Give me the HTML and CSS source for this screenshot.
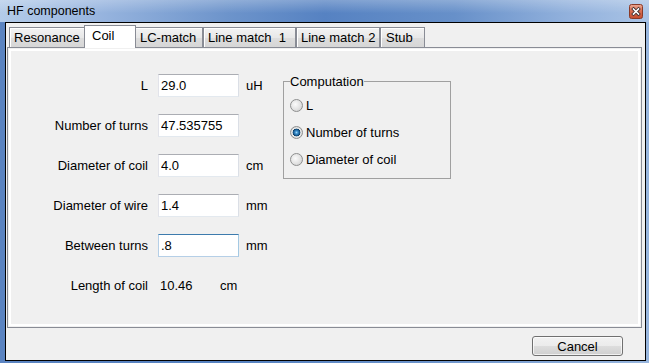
FILE: index.html
```html
<!DOCTYPE html>
<html>
<head>
<meta charset="utf-8">
<title>HF components</title>
<link rel="stylesheet" href="styles.css">
</head>
<body>
<div class="window">
  <div class="titlebar">
    <span class="title">HF components</span>
    <span class="close">
      <svg width="14" height="15" viewBox="0 0 14 15">
        <defs>
          <linearGradient id="cg" x1="0" y1="0" x2="0" y2="1">
            <stop offset="0" stop-color="#eba994"/>
            <stop offset="0.45" stop-color="#d86e52"/>
            <stop offset="1" stop-color="#c44b2d"/>
          </linearGradient>
        </defs>
        <rect x="0.5" y="0.5" width="13" height="14" rx="2" fill="url(#cg)" stroke="#8a3a28"/>
        <path d="M4.5 5 L9.5 10 M9.5 5 L4.5 10" stroke="#3b2b2b" stroke-width="3.2" stroke-linecap="square"/>
        <path d="M4.5 5 L9.5 10 M9.5 5 L4.5 10" stroke="#ffffff" stroke-width="1.6" stroke-linecap="square"/>
      </svg>
    </span>
  </div>
  <div class="frame">
    <div class="client">
      <div class="tabs">
        <div class="tab tab-res">Resonance</div>
        <div class="tab tab-coil tab-active">Coil</div>
        <div class="tab tab-lc">LC-match</div>
        <div class="tab tab-lm1">Line match  1</div>
        <div class="tab tab-lm2">Line match 2</div>
        <div class="tab tab-stub">Stub</div>
      </div>
      <div class="panel">
        <div class="form">
          <label class="lbl">L</label>
          <input class="field" type="text" value="29.0">
          <span class="unit">uH</span>

          <label class="lbl">Number of turns</label>
          <input class="field" type="text" value="47.535755">
          <span class="unit"></span>

          <label class="lbl">Diameter of coil</label>
          <input class="field" type="text" value="4.0">
          <span class="unit">cm</span>

          <label class="lbl">Diameter of wire</label>
          <input class="field" type="text" value="1.4">
          <span class="unit">mm</span>

          <label class="lbl">Between turns</label>
          <input class="field field-focus" type="text" value=".8">
          <span class="unit">mm</span>

          <span class="lbl">Length of coil</span>
          <span class="result"><span class="result-val">10.46</span><span>cm</span></span>
        </div>
        <fieldset class="group">
          <legend class="group-title">Computation</legend>
          <label class="opt"><input class="radio" type="radio" name="comp">L</label>
          <label class="opt"><input class="radio" type="radio" name="comp" checked>Number of turns</label>
          <label class="opt"><input class="radio" type="radio" name="comp">Diameter of coil</label>
        </fieldset>
      </div>
      <div class="footer">
        <button class="btn" type="button">Cancel</button>
      </div>
    </div>
  </div>
</div>
</body>
</html>
```
FILE: styles.css
```css
* { box-sizing: border-box; }

html, body {
  margin: 0;
  padding: 0;
  background: #ffffff;
}

body {
  font-family: "Liberation Sans", Arial, sans-serif;
  font-size: 13px;
  color: #000;
}

.window {
  width: 649px;
  height: 363px;
  display: flex;
  flex-direction: column;
  background: linear-gradient(to right, #5b84c1 0%, #5581c0 35%, #6a92ca 65%, #98b6de 100%);
}

.titlebar {
  flex: none;
  height: 22px;
  display: flex;
  align-items: center;
  justify-content: space-between;
  padding: 0 6px 0 7px;
  background:
    linear-gradient(to bottom, rgba(255,255,255,0.25), rgba(255,255,255,0) 60%),
    linear-gradient(to right, #b3cbe9 0%, #98b5df 15%, #6d94cb 35%, #5682c2 50%, #6790c9 70%, #93b2dd 88%, #a9c3e5 100%);
}

.title {
  font-size: 12.5px;
  color: #000;
  line-height: 22px;
}

.close {
  display: flex;
  width: 14px;
  height: 15px;
}

.frame {
  flex: 1;
  display: flex;
  padding: 0 3px 2px 5px;
}

.client {
  flex: 1;
  display: flex;
  flex-direction: column;
  border: 1px solid #000;
  background: #f0f0f0;
}

/* Tabs */
.tabs {
  flex: none;
  display: flex;
  align-items: flex-end;
  height: 22px;
  margin-top: 2px;
  padding-left: 3px;
}

.tab {
  height: 20px;
  line-height: 19px;
  padding-left: 4px;
  white-space: pre;
  border: 1px solid #898c95;
  border-bottom: none;
  background: linear-gradient(to bottom, #f3f3f3 0%, #e8e8e8 50%, #dddddd 51%, #d6d6d6 100%);
  box-shadow: inset 1px 1px 0 #ffffff;
}

.tab-res  { width: 77px; }
.tab-coil { width: 48px; }
.tab-lc   { width: 69px; padding-left: 5px; }
.tab-lm1  { width: 93px; }
.tab-lm2  { width: 84px; }
.tab-stub { width: 45px; padding-left: 5px; }

.tab-active {
  position: relative;
  z-index: 1;
  width: 52px;
  height: 23px;
  line-height: 20px;
  margin: 0 -2px -1px -2px;
  padding-left: 7px;
  background: #ffffff;
  box-shadow: none;
}

/* Panel */
.panel {
  flex: none;
  height: 281px;
  margin: 0 3px 0 1px;
  border: 1px solid #898c95;
  box-shadow: inset 0 0 0 1px #f0f0f0, inset 0 0 0 3px #ffffff;
  display: flex;
  align-items: flex-start;
  padding: 26px 0 0 8px;
}

.form {
  display: grid;
  grid-template-columns: 132px 81px 30px;
  grid-auto-rows: 23px;
  column-gap: 10px;
  row-gap: 17px;
  align-items: center;
}

.form .unit {
  margin-left: -3px;
}

.lbl {
  text-align: right;
  white-space: nowrap;
}

.field {
  width: 81px;
  height: 23px;
  margin: 0;
  padding: 0 2px;
  font: inherit;
  color: #000;
  background: #fff;
  border: 1px solid;
  border-color: #abadb3 #dbdfe6 #e3e9ef #e2e3ea;
  outline: none;
}

.field-focus {
  border-color: #3d7bad #a4c9e3 #b5cfe7 #b5cfe7;
}

.unit {
  white-space: nowrap;
}

.result {
  grid-column: 2 / 4;
  display: flex;
  padding-left: 2px;
}

.result-val {
  width: 60px;
}

/* Group box */
.group {
  margin: 0 0 0 4px;
  width: 168px;
  min-width: 0;
  padding: 3px 6px 5px 6px;
  border: 1px solid #a0a0a0;
}

.group-title {
  padding: 0;
  line-height: 15px;
}

.opt {
  display: flex;
  align-items: center;
  gap: 3px;
  height: 27px;
  white-space: nowrap;
}

.radio {
  appearance: none;
  -webkit-appearance: none;
  width: 13px;
  height: 13px;
  margin: 0;
  border: 1px solid #8e8f8f;
  border-radius: 50%;
  background: radial-gradient(circle at 40% 40%, #fbfbfb 0%, #e2e2e2 55%, #c9c9c9 100%);
}

.radio:checked {
  background: radial-gradient(circle at 50% 50%, #9ad6f5 0, #3a8ccb 1.5px, #175a8e 3px, #0f3d63 3.6px, #ececec 4.2px, #d2d2d2 6px);
}

/* Footer */
.footer {
  flex: 1;
  display: flex;
  justify-content: flex-end;
  align-items: flex-start;
  padding: 8px 22px 0 0;
}

.btn {
  width: 91px;
  height: 20px;
  margin: 0;
  padding: 0;
  font: inherit;
  color: #000;
  border: 1px solid #707070;
  border-radius: 3px;
  background: linear-gradient(to bottom, #f2f2f2 0%, #ebebeb 50%, #dddddd 51%, #cfcfcf 100%);
  box-shadow: inset 0 0 0 1px rgba(255,255,255,0.7);
}
```
